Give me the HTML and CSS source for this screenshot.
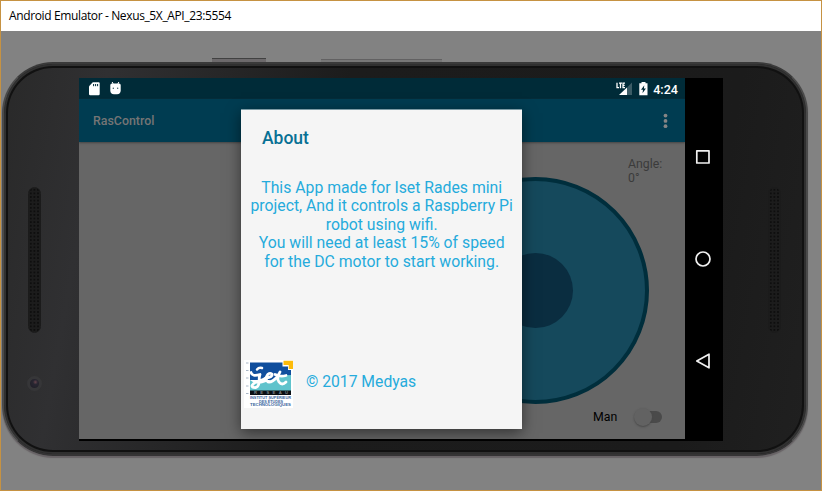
FILE: index.html
```html
<!DOCTYPE html>
<html lang="en">
<head>
<meta charset="utf-8">
<title>Android Emulator</title>
<link rel="stylesheet" href="styles.css">
</head>
<body>
<div class="window">
  <header class="titlebar"><span>Android Emulator - Nexus_5X_API_23:5554</span></header>
  <main class="stage">
    <div class="phone">
      <i class="key key-power"></i>
      <i class="key key-volume"></i>
      <div class="bezel bezel-left">
        <i class="speaker"></i>
        <i class="camera"></i>
      </div>
      <div class="screen">
        <div class="app">
          <div class="statusbar">
            <svg class="ic-sd" width="11" height="14" viewBox="0 0 11 14"><path fill="#fff" d="M3.8.3H9.6Q10.7.3 10.7 1.4V12Q10.7 13.3 9.5 13.3H1.2Q0 13.3 0 12V4.2Z"/><path stroke="#002b38" stroke-width="1" d="M4.6 2V4.2M6.6 2V4.2M8.6 2V4.2"/></svg>
            <svg class="ic-bug" width="11" height="14" viewBox="0 0 11 14"><path d="M2.200 0 3.600 3M8.800 0 7.400 3" stroke="#fff"/><path fill="#fff" d="M.3 3Q.3 1.500 2 1.500H9Q10.700 1.500 10.700 3V8.500Q10.700 12.200 7 12.200H4Q.3 12.200 .3 8.500Z"/><circle cx="3.300" cy="6.300" r=".7" fill="#33535d"/><circle cx="7.700" cy="6.300" r=".7" fill="#33535d"/></svg>
            <span class="grow"></span>
            <svg class="ic-signal" width="17" height="14" viewBox="0 0 17 14"><path fill="#3c5c66" d="M16 .6V13H11V5.500Z"/><path fill="#fff" d="M3 13H11V5.500Z"/><path fill="none" stroke="#fff" stroke-width="1.300" d="M1 .7V5.700H3M3 1.200H6M4.500 1.200V6.200M9 1.200H7V5.700H9M7 3.400H8.700"/></svg>
            <svg class="ic-battery" width="9" height="14" viewBox="0 0 9 14"><path fill="#fff" d="M2.500 0H6.500V1.300H8.500V13.200H.300V1.300H2.500Z"/><path fill="#002b38" d="M5.300 3.200 2 7.800H4L3.500 11.300 6.900 6.600H4.900Z"/></svg>
            <span class="clock">4:24</span>
          </div>
          <div class="toolbar">
            <span>RasControl</span>
            <svg width="5" height="16" viewBox="0 0 5 16" fill="#858585"><circle cx="2.500" cy="2.600" r="1.900"/><circle cx="2.500" cy="7.900" r="1.900"/><circle cx="2.500" cy="13.200" r="1.900"/></svg>
          </div>
          <div class="content">
            <div class="joystick"><i class="knob"></i></div>
            <div class="angle">Angle:<br>0°</div>
            <div class="mode"><span>Man</span><i class="switch"><i class="thumb"></i></i></div>
          </div>
          <section class="dialog">
            <h1>About</h1>
            <p>This App made for Iset Rades mini<br>project, And it controls a Raspberry Pi<br>robot using wifi.<br>You will need at least 15% of speed<br>for the DC motor to start working.</p>
            <footer>
              <svg width="49" height="48" viewBox="0 0 49 48">
                <path fill="#fff" d="M0 0H49V48H0Z"/>
                <path fill="#114f9e" d="M6 2.500H47V20H6Z"/>
                <path fill="#60c3cc" d="M6 20Q12 25 19 23T31 18 47 15V31H6Z"/>
                <path fill="#fff" d="M38.500 0H49V10H44V6.500H38.500Z"/>
                <path fill="#fdbb0a" d="M39.500 .7H49V9H44.700V5H39.500Z"/>
                <g fill="none" stroke="#fff" stroke-linecap="round" stroke-linejoin="round">
                  <path stroke-width="2.800" d="M7 12.500Q8 17 16 14.500C14 19 17 26 12 27.500C5 28 8 23 14 21.500Q20 20 23 17"/>
                  <path stroke-width="2.800" d="M22 18Q29 17 28 14C24 11 20 19 24 22Q28 23 34 16"/>
                  <path stroke-width="2.800" d="M36 12Q32 18 35 22Q38 26 42 22M31 14.500Q36 17 42 15.500"/>
                  <path stroke-width="2.500" d="M13 9.500Q15 7 18 8"/>
                </g>
                <path fill="#0b1014" d="M6 30.500H47V35H6Z"/>
                <path stroke="#a9b6c6" stroke-width="1" d="M2 3H4.500M2 10.500H4.500M2 18H4.500M2 26H4.500M2 33.500H4.500"/>
                <g font-family="Liberation Sans" font-weight="700" fill="#3a659d">
                  <text x="10" y="34.400" font-size="4.200" fill="#7d8388" textLength="34">RESEAU</text>
                  <text x="6" y="39.400" font-size="2.800" textLength="41" lengthAdjust="spacingAndGlyphs">INSTITUT SUPÉRIEUR</text>
                  <text x="15" y="42.900" font-size="2.600" textLength="24" lengthAdjust="spacingAndGlyphs">DES ÉTUDES</text>
                  <text x="6" y="46.400" font-size="2.600" textLength="41" lengthAdjust="spacingAndGlyphs">TECHNOLOGIQUES</text>
                </g>
              </svg>
              <span>© 2017 Medyas</span>
            </footer>
          </section>
        </div>
        <nav class="navbar">
          <svg width="16" height="16" viewBox="0 0 16 16"><path d="M1.800 1.800H14V14H1.800Z"/></svg>
          <svg width="16" height="16" viewBox="0 0 16 16"><circle cx="8" cy="8" r="7"/></svg>
          <svg width="16" height="16" viewBox="0 0 16 16"><path d="M1.800 8 14 1.200V14.800Z"/></svg>
        </nav>
      </div>
      <div class="bezel bezel-right"><i class="speaker"></i></div>
    </div>
  </main>
</div>
</body>
</html>
```
FILE: styles.css
```css
* { box-sizing: border-box; }
body { margin: 0; font-family: Roboto, sans-serif; }
i { display: block; }
.window { width: 822px; height: 491px; border: 1px solid #c69242; background: #828282; overflow: hidden; }
.titlebar { height: 30px; background: #fff; padding-left: 8px; font: 12px/30px "Open Sans", sans-serif; color: #000; white-space: nowrap; }
.titlebar span { letter-spacing: -0.37px; }
.stage { padding: 31px 0 0 1px; }
.phone {
  position: relative; display: flex; width: 806px; height: 394px;
  border-radius: 51px; border: 2px solid #4a4a4a; border-top-color: #3a3a3a; border-bottom-color: #353435;
  background: linear-gradient(100deg, #292929 0, #303032 12%, #1c1c1c 40%, #1b1b1b 85%, #202020 100%);
  box-shadow: inset 0 0 0 2px #303030, inset 0 0 0 4px #111, 0 2px 1px #686366;
}
.key { position: absolute; height: 4px; border-top: 1px solid #414141; background: #6c696b; }
.key-power { left: 208px; top: -6px; width: 54px; }
.key-volume { left: 317px; top: -5px; width: 121px; height: 3px; border-color: #626162; background: #777; }
.bezel { display: flex; flex-direction: column; }
.bezel-left { width: 75px; padding: 123px 0 0 24px; }
.bezel-right { padding: 123px 0 0 45px; }
.speaker {
  width: 13px; height: 146px; border-radius: 7px; border: 1px solid #1b1b1b;
  background: radial-gradient(circle, #0e0e0e 0.7px, #1c1c1c 1.3px) 0 0 / 3.6px 3.6px;
}
.camera { width: 15px; height: 15px; margin: 43px 0 0 -1px; border-radius: 50%; border: 3px solid #363638; background: radial-gradient(circle at 60% 35%, #65434c 0, #282631 30%, #1d1c25); }
.screen { width: 644px; height: 363px; margin-top: 14px; display: flex; background: #000; }
.app { position: relative; width: 606px; height: 361px; background: #666; overflow: hidden; }
.statusbar { height: 21px; display: flex; align-items: flex-start; background: #002b38; padding: 4px 7px 0 10px; }
.ic-bug { margin-left: 10px; }
.grow { flex: 1; }
.ic-signal { margin-right: 6px; }
.clock { margin-left: 5px; color: #fff; font-size: 12.600px; line-height: 15px; font-weight: 500; }
.toolbar { position: relative; height: 43px; display: flex; align-items: center; justify-content: space-between; background: #003c51; padding: 0 17px 0 14px; color: #757575; font-size: 12.400px; font-weight: 500; box-shadow: 0 1px 2px #444; }
.content { display: grid; height: 297px; }
.content > * { grid-area: 1 / 1; justify-self: start; align-self: start; }
.joystick { width: 227px; height: 227px; margin: 35px 0 0 343px; border: 4px solid #002e3c; border-radius: 50%; background: #15495c; display: grid; place-items: center; }
.knob { width: 75px; height: 75px; border-radius: 50%; background: #0a2d40; }
.angle { margin: 15px 0 0 549px; color: #3b3b3b; font-size: 12.300px; line-height: 14px; }
.mode { display: flex; align-items: center; margin: 265px 0 0 514px; color: #000; font-size: 12.300px; line-height: 20px; }
.switch { width: 24px; height: 12px; margin: -1px 0 0 21px; border-radius: 6px; background: #4a4a4a; display: flex; align-items: center; }
.thumb { flex: none; width: 18px; height: 18px; margin-left: -4px; border-radius: 50%; background: #626262; box-shadow: 0 1px 2px #484848; }
.dialog { position: absolute; left: 162px; top: 31px; width: 281.400px; height: 320px; background: #f5f5f5; border-top: 1px solid #7b9aa4; box-shadow: 0 4px 14px rgba(0,0,0,.5); }
.dialog h1 { margin: 18px 0 0 21px; font-size: 17.500px; line-height: 20px; font-weight: 500; color: #077094; }
.dialog p { margin: 31px 0 0; text-align: center; font-size: 15.780px; line-height: 18.400px; color: #25abdc; white-space: nowrap; }
.dialog footer { display: flex; align-items: center; margin: 89px 0 0 3px; color: #25abdc; font-size: 15.700px; line-height: 20px; }
.dialog footer span { margin: -4px 0 0 13px; }
.navbar { width: 38px; display: flex; flex-direction: column; align-items: center; padding: 71px 2px 0 0; gap: 86px; }
.navbar svg { flex: none; fill: none; stroke: #f0f0f0; stroke-width: 1.700; stroke-linejoin: round; }
```
